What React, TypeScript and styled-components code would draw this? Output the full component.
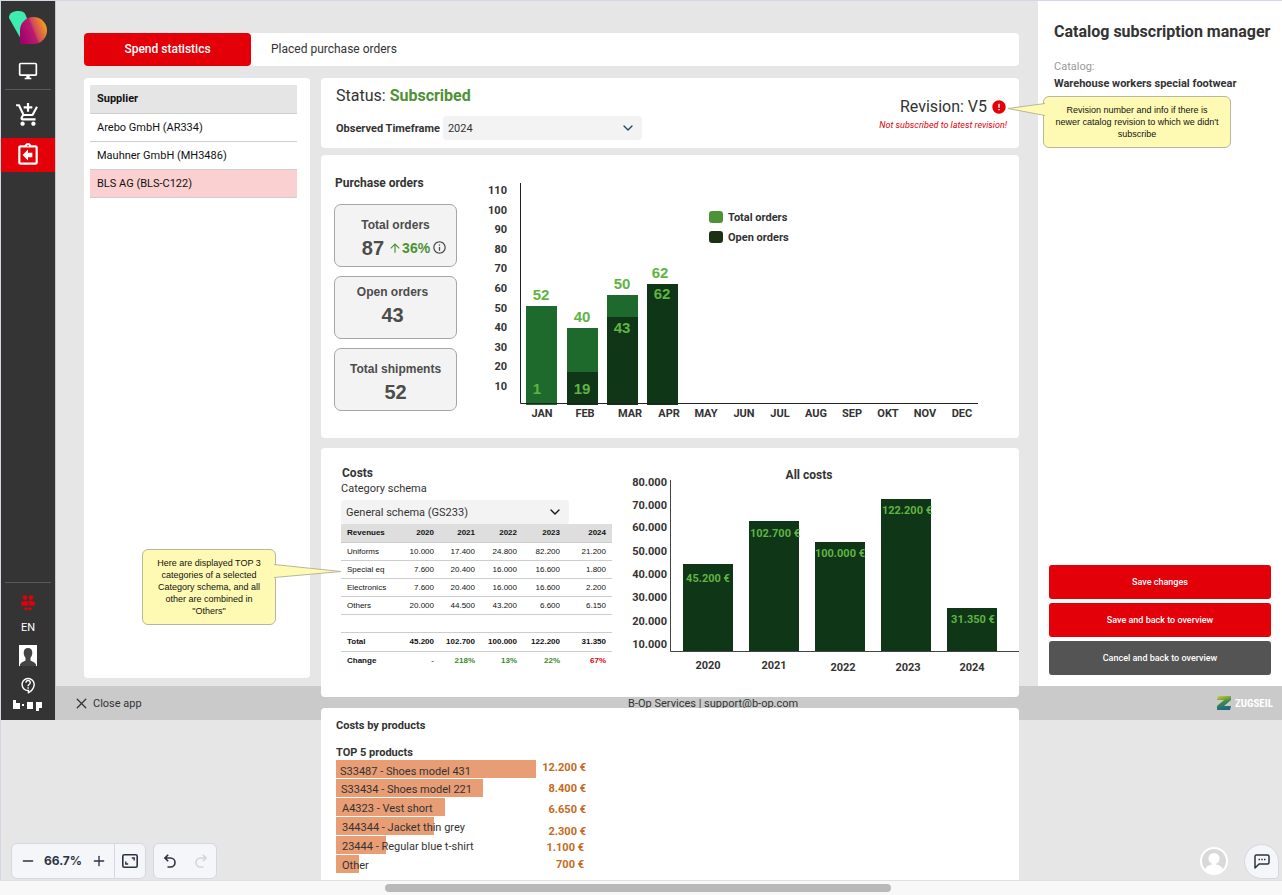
import React from 'react';
import styled, { createGlobalStyle, css } from 'styled-components';
import {
  MdAddShoppingCart,
  MdArrowUpward,
  MdError,
  MdOutlineAssignmentReturn,
  MdOutlineContactSupport,
  MdOutlineDesktopWindows,
  MdOutlineInfo,
} from 'react-icons/md';
import { ChevronDown, Minus, Plus, X } from 'lucide-react';

const color = {
  red: '#e30009',
  ink: '#333333',
  board: '#e6e6e6',
  green: '#4d9236',
  lime: '#5fb443',
  darkBar: '#0f3617',
  midBar: '#1d6a2c',
  field: '#f3f3f3',
  orange: '#e89d74',
  orangeText: '#c56a1b',
};

const sans = "Roboto, 'Liberation Sans', sans-serif";
const arial = "'Liberation Sans', Arial, sans-serif";

const GlobalStyle = createGlobalStyle`
  *, *::before, *::after { box-sizing: border-box; }
  body { margin: 0; background: ${color.board}; }
  button, select, input { font: inherit; color: inherit; }
  h1, h2, p { margin: 0; }
`;

const Page = styled.div`
  display: flex;
  flex-direction: column;
  height: 100vh;
  background: ${color.board};
  border-top: 1px solid #d3d9e4;
  font-family: ${sans};
  font-size: 11px;
  color: ${color.ink};
`;

const Board = styled.div`
  position: relative;
  flex: 1;
  min-height: 0;
  overflow: hidden;
  border-left: 1px solid #d3d9e4;
`;

const Frame = styled.div`
  display: grid;
  grid-template-columns: 55px minmax(0, 1fr) 244px;
  grid-template-rows: 685px 34px auto;
`;

/* ---------- sidebar ---------- */

const Sidebar = styled.nav`
  grid-area: 1 / 1 / 3 / 2;
  display: flex;
  flex-direction: column;
  background: #343434;
  border-right: 1px solid #c4c7cc;
  color: #fff;
`;

const Brand = styled.div`
  height: 53px;
  padding: 9px 0 0 8px;
`;

const NavButton = styled.button<{ $height: number; $active?: boolean; $tint?: string }>`
  display: flex;
  align-items: center;
  justify-content: center;
  height: ${(p) => p.$height}px;
  padding: 0;
  border: 0;
  background: ${(p) => (p.$active ? color.red : 'transparent')};
  color: ${(p) => p.$tint ?? '#fff'};
`;

const NavDivider = styled.hr<{ $bottom?: boolean }>`
  width: 46px;
  height: 1px;
  margin: ${(p) => (p.$bottom ? 'auto auto 6px' : '1px auto 2px')};
  border: 0;
  background: #5a5a5a;
`;

const SidebarFoot = styled.div`
  display: flex;
  justify-content: center;
  align-items: center;
  height: 18px;
  margin-bottom: 5px;
`;

/* ---------- main column ---------- */

const Main = styled.main`
  grid-area: 1 / 2 / 4 / 3;
  z-index: 1;
  display: grid;
  grid-template-columns: 226px minmax(0, 1fr);
  gap: 12px 11px;
  align-content: start;
  padding: 32px 19px 0 28px;
  pointer-events: none;
  & > * { pointer-events: auto; }
`;

const Tabs = styled.div`
  grid-column: 1 / 3;
  display: flex;
  height: 33px;
  border-radius: 4px;
  background: #fff;
`;

const Tab = styled.button<{ $active?: boolean }>`
  padding: 0 20px 2px;
  border: 0;
  border-radius: 4px;
  background: transparent;
  font-size: 12px;
  ${(p) =>
    p.$active &&
    css`
      width: 167px;
      background: ${color.red};
      color: #fff;
      font-weight: 500;
    `}
`;

const Panel = styled.section`
  position: relative;
  border-radius: 4px;
  background: #fff;
`;

const SupplierPanel = styled(Panel)`
  z-index: 1;
  align-self: start;
  min-height: 600px;
  padding: 7px 13px 7px 6px;
`;

const SupplierTable = styled.table`
  width: 100%;
  border-collapse: collapse;
  color: #111;
  th, td {
    height: 28px;
    padding: 0 7px;
    border-bottom: 1px solid #cfcfcf;
    text-align: left;
  }
  th { background: #e5e5e5; }
`;

const SupplierRow = styled.tr<{ $selected?: boolean }>`
  background: ${(p) => (p.$selected ? '#fbd0d0' : 'transparent')};
`;

const Cards = styled.div`
  display: flex;
  flex-direction: column;
  gap: 10px;
  min-width: 0;
`;

const StatusCard = styled(Panel)`
  display: flex;
  justify-content: space-between;
  height: 70px;
  margin-bottom: -3px;
  padding: 8px 12px 8px 15px;
`;

const Stack = styled.div<{ $align?: string; $gap?: number; $top?: number }>`
  display: flex;
  flex-direction: column;
  align-items: ${(p) => p.$align ?? 'flex-start'};
  gap: ${(p) => p.$gap ?? 0}px;
  padding-top: ${(p) => p.$top ?? 0}px;
`;

const Headline = styled.p`
  display: flex;
  align-items: center;
  gap: 4px;
  font-size: 16px;
  line-height: 20px;
  strong { color: ${color.green}; }
`;

const Note = styled.p`
  color: ${color.red};
  font-size: 9px;
  font-style: italic;
  line-height: 16px;
`;

const Field = styled.div`
  display: flex;
  align-items: center;
  gap: 3px;
  label { font-weight: 700; }
`;

const SelectBox = styled.div<{ $width: number }>`
  position: relative;
  width: ${(p) => p.$width}px;
  select {
    display: block;
    width: 100%;
    height: 24px;
    padding: 0 5px;
    border: 0;
    border-radius: 3px;
    background: ${color.field};
    appearance: none;
  }
  svg {
    position: absolute;
    top: 4px;
    right: 6px;
    pointer-events: none;
  }
`;

const OrdersCard = styled(Panel)`
  display: flex;
  gap: 23px;
  height: 283px;
  padding: 21px 0 0 13px;
`;

const Title = styled.h2<{ $size?: number; $indent?: number }>`
  padding-left: ${(p) => p.$indent ?? 0}px;
  font-size: ${(p) => p.$size ?? 12}px;
  font-weight: 700;
  line-height: 14px;
`;

const Stats = styled.div`
  display: flex;
  flex-direction: column;
  gap: 9px;
  padding-top: 14px;
`;

const StatCard = styled.div<{ $raised?: boolean }>`
  display: flex;
  flex-direction: column;
  align-items: center;
  justify-content: center;
  width: 123px;
  height: 63px;
  padding: ${(p) => (p.$raised ? '0 6px 9px 0' : '0')};
  border: 1px solid #a6a6a6;
  border-radius: 7px;
  background: ${color.field};
  color: #4c4c4c;
  font-family: ${arial};
  font-weight: 700;
`;

const StatLabel = styled.div`
  font-size: 12px;
  line-height: 24px;
`;

const StatValue = styled.div<{ $trend?: boolean }>`
  display: flex;
  align-items: center;
  padding-left: ${(p) => (p.$trend ? 18 : 0)}px;
  font-size: 20px;
  line-height: 22px;
`;

const Trend = styled.span`
  display: flex;
  align-items: center;
  margin: 0 2px 0 4px;
  color: ${color.green};
  font-size: 14px;
`;

const CostsCard = styled(Panel)`
  display: flex;
  gap: 16px;
  height: 249px;
  margin-bottom: 1px;
  padding: 16px 0 0 20px;
`;

const SchemaLabel = styled.label`
  margin-bottom: 3px;
  line-height: 17px;
`;

const CostTable = styled.table`
  width: 271px;
  table-layout: fixed;
  border-collapse: collapse;
  color: #111;
  font-family: ${arial};
  font-size: 8px;
  th, td {
    height: 18px;
    padding: 0 6px;
    border-bottom: 1px solid #cdcdcd;
    text-align: right;
    font-weight: 400;
  }
  th:first-child { text-align: left; }
  thead th {
    background: #dedede;
    font-weight: 700;
  }
  tfoot th, tfoot td {
    height: 19px;
    font-weight: 700;
  }
  tfoot tr:last-child > * { border-bottom: 0; }
`;

const Change = styled.td<{ $down?: boolean }>`
  color: ${(p) => (p.$down ? color.red : '#3c8a2c')};
`;

const ProductsCard = styled(Panel)`
  padding: 11px 15px 40px;
`;

const ProductsHeading = styled(Title)`
  margin-top: 13px;
`;

const ChartSvg = styled.svg`
  display: block;
  flex: none;
  overflow: visible;
  font-family: ${sans};
  font-size: 11px;
  font-weight: 700;
  fill: ${color.ink};
`;

const BarValue = styled.text`
  fill: ${color.lime};
  font-family: ${arial};
  font-size: 15px;
`;

/* ---------- right panel ---------- */

const Manager = styled.aside`
  position: relative;
  grid-area: 1 / 3 / 2 / 4;
  z-index: 2;
  display: flex;
  flex-direction: column;
  padding: 20px 11px 11px;
  background: #fff;
`;

const ManagerTitle = styled.h1`
  padding-left: 5px;
  font-size: 16px;
  line-height: 22px;
  white-space: nowrap;
`;

const Muted = styled.p`
  padding: 15px 0 0 5px;
  color: #999;
  line-height: 17px;
`;

const CatalogName = styled.p`
  padding-left: 5px;
  font-weight: 700;
  line-height: 17px;
`;

const Actions = styled.div`
  display: flex;
  flex-direction: column;
  gap: 4px;
  margin-top: auto;
`;

const ActionButton = styled.button<{ $neutral?: boolean }>`
  height: 34px;
  border: 0;
  border-radius: 3px;
  background: ${(p) => (p.$neutral ? '#545454' : color.red)};
  color: #fff;
  font-size: 9px;
  font-weight: 500;
`;

/* ---------- callouts ---------- */

const Callout = styled.div<{ $left: number; $top: number; $width: number }>`
  position: absolute;
  left: ${(p) => p.$left}px;
  top: ${(p) => p.$top}px;
  width: ${(p) => p.$width}px;
  padding: 7px 0;
  border: 1px solid #b9b79a;
  border-radius: 6px;
  background: #fffab3;
  color: #111;
  font-family: ${arial};
  font-size: 9px;
  line-height: 12px;
  text-align: center;
`;

const Pointer = styled.svg<{ $side: 'left' | 'right' }>`
  position: absolute;
  top: ${(p) => (p.$side === 'left' ? 5 : 13)}px;
  ${(p) => (p.$side === 'left' ? 'right: 100%; margin-right: -1px;' : 'left: 100%; margin-left: -1px;')}
  fill: #fffab3;
  stroke: #b9b79a;
`;

/* ---------- footer ---------- */

const Footer = styled.footer`
  grid-area: 2 / 2 / 3 / 4;
  display: grid;
  grid-template-columns: minmax(0, 33fr) minmax(0, 35fr) auto;
  align-items: center;
  padding: 0 9px 0 17px;
  background: #cacaca;
`;

const CloseButton = styled.button`
  display: flex;
  align-items: center;
  gap: 3px;
  padding: 0;
  border: 0;
  background: transparent;
`;

const Vendor = styled.div`
  display: flex;
  align-items: center;
  gap: 4px;
  color: #fff;
  font-family: 'Liberation Sans Narrow', 'Roboto Condensed', ${arial};
  font-size: 11px;
  font-weight: 700;
`;

/* ---------- canvas controls ---------- */

const FloatingControls = styled.div`
  position: absolute;
  z-index: 3;
  right: 3px;
  bottom: 1px;
  left: 10px;
  display: flex;
  align-items: center;
  gap: 7px;
  pointer-events: none;
`;

const Toolbar = styled.div`
  display: flex;
  height: 36px;
  border: 1px solid #d5d8e2;
  border-radius: 6px;
  background: #f5f6f9;
  color: #2b3442;
  font-family: Inter, ${arial};
  font-size: 12px;
  font-weight: 700;
  pointer-events: auto;
`;

const ToolButton = styled.button<{ $separated?: boolean }>`
  display: flex;
  align-items: center;
  justify-content: center;
  width: 31px;
  padding: 0;
  border: 0;
  border-left: ${(p) => (p.$separated ? '1px solid #d5d8e2' : '0')};
  background: transparent;
  &:disabled { color: #d2d5dd; }
`;

const ZoomLevel = styled.span`
  width: 40px;
  line-height: 34px;
  text-align: center;
`;

const Presence = styled.div`
  display: flex;
  margin: 0 9px 0 auto;
`;

const CommentButton = styled.button`
  display: flex;
  align-items: center;
  justify-content: center;
  width: 35px;
  height: 35px;
  padding: 0;
  border: 1px solid #d5d8e2;
  border-radius: 18px 18px 4px 18px;
  background: #f5f6f9;
  color: #2b3442;
  pointer-events: auto;
`;

const ScrollTrack = styled.div`
  flex: none;
  height: 15px;
  padding-top: 3px;
  border-top: 1px solid #e0e0e0;
  background: #f8f8f8;
`;

const ScrollThumb = styled.div`
  width: 39.5%;
  height: 8px;
  margin-left: 30%;
  border-radius: 4px;
  background: #b9b9b9;
`;

/* ---------- drawings ---------- */

const BrandMark = () => (
  <svg width="38" height="36" viewBox="0 0 38 36" aria-hidden="true">
    <defs>
      <linearGradient id="brandWarm" x1="0" y1="0.7" x2="1" y2="0.3">
        <stop offset="0" stopColor="#a3006d" />
        <stop offset="0.48" stopColor="#b81d6e" />
        <stop offset="0.55" stopColor="#d0475a" />
        <stop offset="1" stopColor="#f9a51a" />
      </linearGradient>
    </defs>
    <path d="M0 8C0 3 4 1 9 1c4 0 7 1 8 5l6 16-10 9z" fill="#3eecb0" />
    <path d="M11 32V20C11 13 17 7 24.500 7S38 13 38 20.500 32 34 24.500 34H14c-2 0-3-1-3-2z" fill="url(#brandWarm)" />
  </svg>
);

const PeopleIcon = () => (
  <svg width="16" height="17" viewBox="0 0 16 17" fill="currentColor" aria-hidden="true">
    <circle cx="5" cy="2.600" r="2.300" />
    <circle cx="11" cy="2.600" r="2.300" />
    <path d="M1 10.500V9c0-2 2-3 4-3s3.500 1 3.500 3v1.500zM9.300 10.500V9c0-1.200-.4-2.200-1.300-3 .9-.2 2-.2 3-.2 2 0 4 1.200 4 3.200v1.500z" />
    <path d="M3.500 13.800L6.500 11.800v1.400h3v-1.400l3 2-3 2v-1.400h-3v1.400z" />
  </svg>
);

const PortraitIcon = () => (
  <svg width="18" height="21" viewBox="0 0 18 21" aria-hidden="true">
    <rect width="18" height="21" fill="#fff" />
    <path d="M9 3c2.800 0 4.300 2 4.300 4.800 0 2-.7 3.800-1.800 5v2.700c1.500 1 4.500 1.500 5.500 4V21H1v-1.500c1-2.500 4-3 5.500-4v-2.700c-1.100-1.200-1.800-3-1.800-5C4.700 5 6.200 3 9 3z" fill="#444" />
  </svg>
);

const BopMark = () => (
  <svg width="30" height="12" viewBox="0 0 30 12" fill="#fff" role="img" aria-label="b-op">
    <rect x="0" y="0" width="3" height="9" />
    <rect x="0" y="3" width="7" height="6" />
    <rect x="9" y="4" width="2" height="2" />
    <rect x="14" y="2" width="6" height="7" />
    <rect x="23" y="2" width="6" height="6" />
    <rect x="23" y="2" width="3" height="9" />
  </svg>
);

const VendorMark = () => (
  <svg width="14" height="14" viewBox="0 0 14 14" aria-hidden="true">
    <defs>
      <linearGradient id="vendorGradient" x1="0" y1="0" x2="0.3" y2="1">
        <stop offset="0" stopColor="#d3d51f" />
        <stop offset="0.55" stopColor="#3f8650" />
        <stop offset="1" stopColor="#1d6b80" />
      </linearGradient>
    </defs>
    <path d="M1 0h13v4L7 10h7l-1 4H0v-4l7-6H0z" fill="url(#vendorGradient)" />
  </svg>
);

const FitIcon = () => (
  <svg width="16" height="14" viewBox="0 0 16 14" fill="none" stroke="currentColor" strokeWidth="1.600" aria-hidden="true">
    <rect x="0.800" y="0.800" width="14.400" height="12.400" rx="1.500" />
    <path d="M9.800 4h2.400v2.400M6.200 10H3.800V7.600" strokeWidth="1.400" />
  </svg>
);

const TurnIcon = ({ forward = false }: { forward?: boolean }) => (
  <svg width="12" height="14" viewBox="0 0 12 14" fill="none" stroke="currentColor" strokeWidth="1.600" aria-hidden="true">
    <g transform={forward ? 'translate(12 0) scale(-1 1)' : undefined}>
      <path d="M4.200 .8L1 4l3.200 3.200M1 4h5.500a4.500 4.500 0 0 1 0 9H3.500" />
    </g>
  </svg>
);

const GuestIcon = () => (
  <svg width="28" height="28" viewBox="0 0 28 28" aria-hidden="true">
    <circle cx="14" cy="14" r="13" fill="#d9d9d9" stroke="#fff" strokeWidth="2" />
    <circle cx="14" cy="11.500" r="5.500" fill="#fff" />
    <path d="M5 23c1-4 4-5 7-5.500v-3h4v3c3 .5 6 1.500 7 5.500-5 5-13 5-18 0z" fill="#fff" />
  </svg>
);

const CommentIcon = () => (
  <svg width="16" height="15" viewBox="0 0 16 15" fill="none" stroke="currentColor" strokeWidth="1.500" aria-hidden="true">
    <path d="M1 14V2.500C1 1.500 1.600 1 2.500 1h11c.9 0 1.500.5 1.500 1.500v6c0 1-.6 1.500-1.500 1.500H5z" strokeLinejoin="round" />
    <path d="M4.500 5.500h1.500M7.300 5.500h1.500M10 5.500h1.500" />
  </svg>
);

/* ---------- charts ---------- */

const orderTicks = [
  ['110', 12], ['100', 32], ['90', 51], ['80', 71], ['70', 90], ['60', 110],
  ['50', 130], ['40', 149], ['30', 169], ['20', 188], ['10', 208],
] as const;

const months = [
  ['JAN', 62], ['FEB', 105], ['MAR', 150], ['APR', 189], ['MAY', 226], ['JUN', 264],
  ['JUL', 300], ['AUG', 336], ['SEP', 372], ['OKT', 408], ['NOV', 445], ['DEC', 482],
] as const;

const orderBars = [
  { x: 46, total: 99, open: 0, totalLabel: '52', openLabel: '1', labelX: 61, openX: 57, openY: 216 },
  { x: 87, total: 77, open: 33, totalLabel: '40', openLabel: '19', labelX: 102, openX: 102, openY: 216 },
  { x: 127, total: 110, open: 88, totalLabel: '50', openLabel: '43', labelX: 142, openX: 142, openY: 155 },
  { x: 167, total: 121, open: 121, totalLabel: '62', openLabel: '62', labelX: 180, openX: 182, openY: 121 },
];

const OrdersChart = () => (
  <ChartSvg width="500" height="247" viewBox="0 -2 500 247" role="img" aria-label="Purchase orders per month">
    {orderTicks.map(([label, y]) => (
      <text key={label} x="27" y={y + 4} textAnchor="end">{label}</text>
    ))}
    {orderBars.map((b) => (
      <g key={b.x}>
        <rect x={b.x} y={227 - b.total} width="31" height={b.total} fill={color.midBar} />
        <rect x={b.x} y={227 - b.open} width="31" height={b.open} fill={color.darkBar} />
        <BarValue x={b.labelX} y={221 - b.total} textAnchor="middle">{b.totalLabel}</BarValue>
        <BarValue x={b.openX} y={b.openY} textAnchor="middle">{b.openLabel}</BarValue>
      </g>
    ))}
    <path d="M40.500 5V225.500H498" fill="none" stroke="#222" />
    {months.map(([label, x]) => (
      <text key={label} x={x} y="239" textAnchor="middle">{label}</text>
    ))}
    <rect x="229" y="33" width="14" height="12" rx="3" fill={color.green} />
    <text x="248" y="43">Total orders</text>
    <rect x="229" y="53" width="14" height="12" rx="3" fill="#1c3012" />
    <text x="248" y="63">Open orders</text>
  </ChartSvg>
);

const costTicks = [
  ['80.000', 18], ['70.000', 41], ['60.000', 63], ['50.000', 87],
  ['40.000', 110], ['30.000', 133], ['20.000', 157], ['10.000', 180],
] as const;

const costBars = [
  { year: '2020', x: 55, top: 100, value: '45.200 €', valueX: 80, valueY: 118, yearX: 80, yearY: 205 },
  { year: '2021', x: 121, top: 57, value: '102.700 €', valueX: 147, valueY: 73, yearX: 146, yearY: 205 },
  { year: '2022', x: 187, top: 78, value: '100.000 €', valueX: 212, valueY: 93, yearX: 215, yearY: 207 },
  { year: '2023', x: 253, top: 35, value: '122.200 €', valueX: 279, valueY: 50, yearX: 280, yearY: 207 },
  { year: '2024', x: 319, top: 144, value: '31.350 €', valueX: 345, valueY: 159, yearX: 344, yearY: 207 },
];

const CostsChart = () => (
  <ChartSvg width="391" height="212" viewBox="0 0 391 212" role="img" aria-label="All costs per year">
    <text x="181" y="15" textAnchor="middle" fontSize="12">All costs</text>
    {costTicks.map(([label, y]) => (
      <text key={label} x="39" y={y + 4} textAnchor="end">{label}</text>
    ))}
    {costBars.map((b) => (
      <g key={b.year}>
        <rect x={b.x} y={b.top} width="50" height={188 - b.top} fill={color.darkBar} />
        <text x={b.valueX} y={b.valueY} textAnchor="middle" fill={color.lime}>{b.value}</text>
        <text x={b.yearX} y={b.yearY} textAnchor="middle">{b.year}</text>
      </g>
    ))}
    <path d="M42.500 16V187.500H391" fill="none" stroke="#444" />
  </ChartSvg>
);

const products = [
  { name: 'S33487 - Shoes model 431', width: 200, x: 4, y: 15, value: '12.200 €', valueX: 250, valueY: 11 },
  { name: 'S33434 - Shoes model 221', width: 147, x: 5, y: 33, value: '8.400 €', valueX: 250, valueY: 32 },
  { name: 'A4323 - Vest short', width: 109, x: 6, y: 52, value: '6.650 €', valueX: 250, valueY: 53 },
  { name: '344344 - Jacket thin grey', width: 98, x: 6, y: 71, value: '2.300 €', valueX: 250, valueY: 75 },
  { name: '23444 - Regular blue t-shirt', width: 50, x: 6, y: 90, value: '1.100 €', valueX: 248, valueY: 91 },
  { name: 'Other', width: 23, x: 6, y: 109, value: '700 €', valueX: 248, valueY: 108 },
];

const ProductsChart = () => (
  <ChartSvg width="260" height="114" viewBox="0 0 260 114" role="img" aria-label="Top 5 products by cost">
    {products.map((p, i) => (
      <g key={p.name}>
        <rect x="0" y={i * 19} width={p.width} height="18" fill={color.orange} />
        <text x={p.x} y={p.y} fontWeight="400">{p.name}</text>
        <text x={p.valueX} y={p.valueY} textAnchor="end" fill={color.orangeText}>{p.value}</text>
      </g>
    ))}
  </ChartSvg>
);

/* ---------- data ---------- */

const suppliers = ['Arebo GmbH (AR334)', 'Mauhner GmbH (MH3486)', 'BLS AG (BLS-C122)'];

const years = ['2020', '2021', '2022', '2023', '2024'];
const columnWidths = [57, 42, 41, 42, 43, 46];
const costRows = [
  ['Uniforms', '10.000', '17.400', '24.800', '82.200', '21.200'],
  ['Special eq', '7.600', '20.400', '16.000', '16.600', '1.800'],
  ['Electronics', '7.600', '20.400', '16.000', '16.600', '2.200'],
  ['Others', '20.000', '44.500', '43.200', '6.600', '6.150'],
];
const totals = ['45.200', '102.700', '100.000', '122.200', '31.350'];
const changes = ['-', '218%', '13%', '22%', '67%'];

export default function App() {
  return (
    <Page>
      <GlobalStyle />
      <Board>
        <Frame>
          <Sidebar>
            <Brand><BrandMark /></Brand>
            <NavButton $height={34} aria-label="Desktop"><MdOutlineDesktopWindows size={20} /></NavButton>
            <NavDivider />
            <NavButton $height={46} aria-label="Add to cart"><MdAddShoppingCart size={26} /></NavButton>
            <NavButton $height={34} $active aria-label="Catalog subscriptions"><MdOutlineAssignmentReturn size={26} /></NavButton>
            <NavDivider $bottom />
            <NavButton $height={28} $tint={color.red} aria-label="Switch user"><PeopleIcon /></NavButton>
            <NavButton $height={20}>EN</NavButton>
            <NavButton $height={36} aria-label="Profile"><PortraitIcon /></NavButton>
            <NavButton $height={24} aria-label="Help"><MdOutlineContactSupport size={17} /></NavButton>
            <SidebarFoot><BopMark /></SidebarFoot>
          </Sidebar>

          <Main>
            <Tabs role="tablist">
              <Tab role="tab" aria-selected="true" $active>Spend statistics</Tab>
              <Tab role="tab" aria-selected="false">Placed purchase orders</Tab>
            </Tabs>

            <SupplierPanel>
              <SupplierTable>
                <thead><tr><th>Supplier</th></tr></thead>
                <tbody>
                  {suppliers.map((name, i) => (
                    <SupplierRow key={name} $selected={i === 2}><td>{name}</td></SupplierRow>
                  ))}
                </tbody>
              </SupplierTable>
              <Callout $left={58} $top={471} $width={134}>
                Here are displayed TOP 3<br />categories of a selected<br />Category schema, and all<br />other are combined in<br />"Others"
                <Pointer $side="right" width="68" height="16" viewBox="0 0 68 16">
                  <path d="M0 1.500L67 8.500L0 14.500" />
                </Pointer>
              </Callout>
            </SupplierPanel>

            <Cards>
              <StatusCard>
                <Stack $gap={10}>
                  <Headline>Status: <strong>Subscribed</strong></Headline>
                  <Field>
                    <label htmlFor="timeframe">Observed Timeframe</label>
                    <SelectBox $width={199}>
                      <select id="timeframe" defaultValue="2024"><option>2024</option></select>
                      <ChevronDown size={16} color="#23485a" />
                    </SelectBox>
                  </Field>
                </Stack>
                <Stack $align="flex-end" $top={11}>
                  <Headline>Revision: V5 <MdError size={16} color={color.red} /></Headline>
                  <Note>Not subscribed to latest revision!</Note>
                </Stack>
              </StatusCard>

              <OrdersCard>
                <div>
                  <Title $indent={1}>Purchase orders</Title>
                  <Stats>
                    <StatCard>
                      <StatLabel>Total orders</StatLabel>
                      <StatValue $trend>
                        87
                        <Trend><MdArrowUpward size={14} />36%</Trend>
                        <MdOutlineInfo size={15} />
                      </StatValue>
                    </StatCard>
                    <StatCard $raised>
                      <StatLabel>Open orders</StatLabel>
                      <StatValue>43</StatValue>
                    </StatCard>
                    <StatCard>
                      <StatLabel>Total shipments</StatLabel>
                      <StatValue>52</StatValue>
                    </StatCard>
                  </Stats>
                </div>
                <OrdersChart />
              </OrdersCard>

              <CostsCard>
                <Stack $top={2}>
                  <Title $indent={1}>Costs</Title>
                  <SchemaLabel htmlFor="schema">Category schema</SchemaLabel>
                  <SelectBox $width={228}>
                    <select id="schema" defaultValue="gs233"><option value="gs233">General schema (GS233)</option></select>
                    <ChevronDown size={16} color="#111" />
                  </SelectBox>
                  <CostTable>
                    <colgroup>
                      {columnWidths.map((w, i) => <col key={i} style={{ width: w }} />)}
                    </colgroup>
                    <thead>
                      <tr><th>Revenues</th>{years.map((y) => <th key={y}>{y}</th>)}</tr>
                    </thead>
                    <tbody>
                      {costRows.map(([name, ...cells]) => (
                        <tr key={name}><th>{name}</th>{cells.map((c, i) => <td key={i}>{c}</td>)}</tr>
                      ))}
                      <tr><td colSpan={6} /></tr>
                    </tbody>
                    <tfoot>
                      <tr><th>Total</th>{totals.map((t) => <td key={t}>{t}</td>)}</tr>
                      <tr><th>Change</th>{changes.map((c, i) => <Change key={c} $down={i === 4}>{c}</Change>)}</tr>
                    </tfoot>
                  </CostTable>
                </Stack>
                <CostsChart />
              </CostsCard>

              <ProductsCard>
                <Title $size={11}>Costs by products</Title>
                <ProductsHeading $size={11}>TOP 5 products</ProductsHeading>
                <ProductsChart />
              </ProductsCard>
            </Cards>
          </Main>

          <Manager>
            <ManagerTitle>Catalog subscription manager</ManagerTitle>
            <Muted>Catalog:</Muted>
            <CatalogName>Warehouse workers special footwear</CatalogName>
            <Actions>
              <ActionButton>Save changes</ActionButton>
              <ActionButton>Save and back to overview</ActionButton>
              <ActionButton $neutral>Cancel and back to overview</ActionButton>
            </Actions>
            <Callout $left={5} $top={95} $width={188}>
              Revision number and info if there is<br />newer catalog revision to which we didn't<br />subscribe
              <Pointer $side="left" width="38" height="14" viewBox="0 0 38 14">
                <path d="M38 1.500L1 6.500L38 13.500" />
              </Pointer>
            </Callout>
          </Manager>

          <Footer>
            <CloseButton><X size={17} strokeWidth={1.750} />Close app</CloseButton>
            <span>B-Op Services | support@b-op.com</span>
            <Vendor><VendorMark />ZUGSEIL</Vendor>
          </Footer>
        </Frame>

        <FloatingControls>
          <Toolbar>
            <ToolButton aria-label="Zoom out"><Minus size={16} /></ToolButton>
            <ZoomLevel>66.7%</ZoomLevel>
            <ToolButton aria-label="Zoom in"><Plus size={16} /></ToolButton>
            <ToolButton $separated aria-label="Fit to screen"><FitIcon /></ToolButton>
          </Toolbar>
          <Toolbar>
            <ToolButton aria-label="Undo"><TurnIcon /></ToolButton>
            <ToolButton aria-label="Redo" disabled><TurnIcon forward /></ToolButton>
          </Toolbar>
          <Presence><GuestIcon /></Presence>
          <CommentButton aria-label="Comments"><CommentIcon /></CommentButton>
        </FloatingControls>
      </Board>
      <ScrollTrack><ScrollThumb /></ScrollTrack>
    </Page>
  );
}
